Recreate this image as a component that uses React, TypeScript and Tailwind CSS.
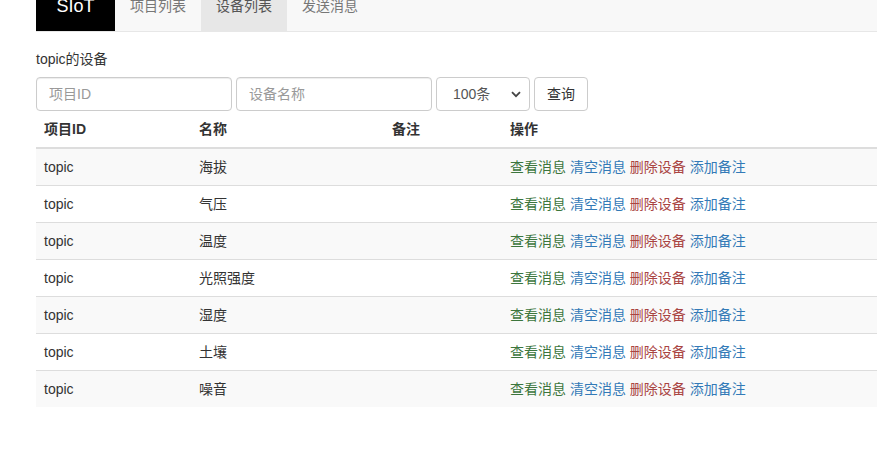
import React from "react";

const rows = ["海拔", "气压", "温度", "光照强度", "湿度", "土壤", "噪音"];

export default function App() {
  return (
    <div
      className="w-full min-h-[468px] bg-white text-[14px] leading-[20px] text-[#333] pl-[36px] overflow-hidden"
      style={{ fontFamily: '"Liberation Sans", Arial, "Noto Sans CJK SC", sans-serif' }}
    >
      {/* navbar */}
      <div className="-mt-[19px] h-[51px] flex bg-[#f8f8f8] border-b border-[#e7e7e7]">
        <div className="w-[79px] bg-black text-white text-[18px] flex items-center justify-center">SIoT</div>
        <div className="px-[15px] flex items-center text-[#777]">项目列表</div>
        <div className="px-[15px] flex items-center text-[#555] bg-[#e7e7e7]">设备列表</div>
        <div className="px-[15px] flex items-center text-[#777]">发送消息</div>
      </div>

      <div className="mt-[17px] h-[20px]">topic的设备</div>

      <div className="mt-[8px] flex gap-[4px]">
        <input
          placeholder="项目ID"
          className="w-[196px] h-[34px] px-[12px] border border-[#ccc] rounded-[4px] shadow-[inset_0_1px_1px_rgba(0,0,0,0.075)] placeholder:text-[#999] outline-none"
        />
        <input
          placeholder="设备名称"
          className="w-[196px] h-[34px] px-[12px] border border-[#ccc] rounded-[4px] shadow-[inset_0_1px_1px_rgba(0,0,0,0.075)] placeholder:text-[#999] outline-none"
        />
        <div className="w-[94px] h-[34px] pl-[16px] pr-[8px] border border-[#ccc] rounded-[4px] flex items-center justify-between text-[#555]">
          <span>100条</span>
          <svg width="10" height="7" viewBox="0 0 10 7">
            <path d="M1 1.2 L5 5.2 L9 1.2" stroke="#444" strokeWidth="1.8" fill="none" />
          </svg>
        </div>
        <div className="w-[54px] h-[34px] border border-[#ccc] rounded-[4px] flex items-center justify-center text-[#333]">
          查询
        </div>
      </div>

      {/* table */}
      <div className="w-full">
        <div className="flex font-bold border-b-2 border-[#ddd]">
          <div className="w-[155px] p-[8px] shrink-0">项目ID</div>
          <div className="w-[193px] p-[8px] shrink-0">名称</div>
          <div className="w-[118px] p-[8px] shrink-0">备注</div>
          <div className="flex-1 p-[8px]">操作</div>
        </div>
        {rows.map((name, i) => (
          <div
            key={name}
            className={
              "flex " +
              (i % 2 === 0 ? "bg-[#f9f9f9] " : "bg-white ") +
              (i === 0 ? "" : "border-t border-[#ddd]")
            }
          >
            <div className="w-[155px] p-[8px] shrink-0">topic</div>
            <div className="w-[193px] p-[8px] shrink-0">{name}</div>
            <div className="w-[118px] p-[8px] shrink-0"></div>
            <div className="flex-1 p-[8px] whitespace-nowrap">
              <span className="text-[#3c763d]">查看消息</span>{" "}
              <span className="text-[#337ab7]">清空消息</span>{" "}
              <span className="text-[#a94442]">删除设备</span>{" "}
              <span className="text-[#337ab7]">添加备注</span>
            </div>
          </div>
        ))}
      </div>
    </div>
  );
}
